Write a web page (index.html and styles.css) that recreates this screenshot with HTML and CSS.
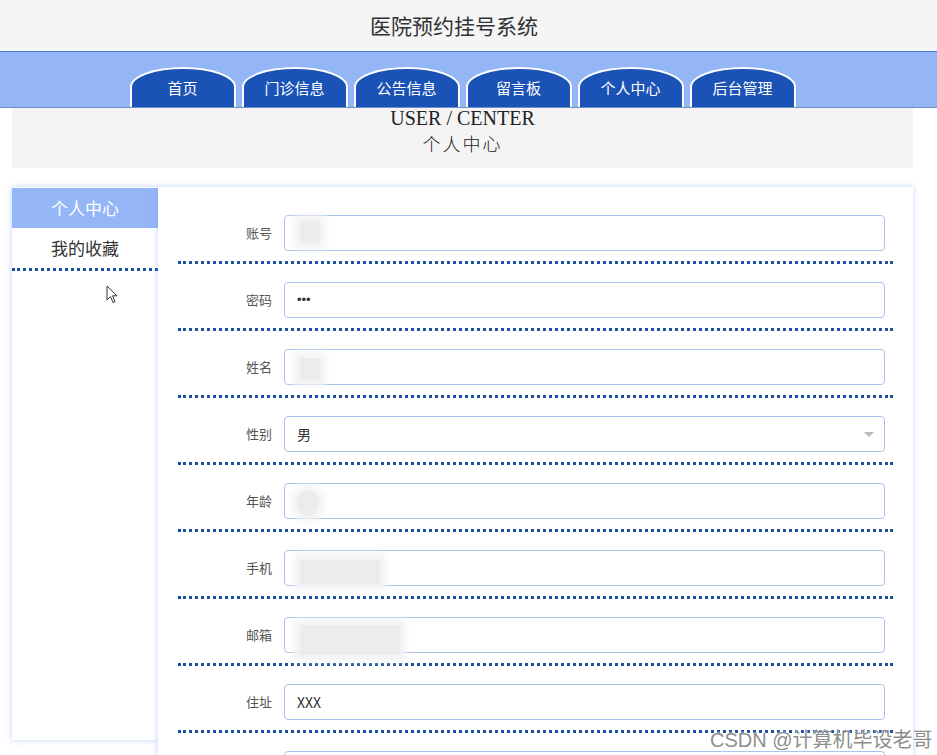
FILE: index.html
```html
<!DOCTYPE html>
<html lang="zh-CN">
<head>
<meta charset="utf-8">
<title>医院预约挂号系统</title>
<link rel="stylesheet" href="styles.css">
</head>
<body>
<header class="top">
  <div class="title">医院预约挂号系统</div>
</header>
<nav class="nav">
  <div class="tabs">
    <a class="tab">首页</a>
    <a class="tab">门诊信息</a>
    <a class="tab">公告信息</a>
    <a class="tab">留言板</a>
    <a class="tab">个人中心</a>
    <a class="tab">后台管理</a>
  </div>
</nav>
<section class="crumb">
  <div class="crumb-en">USER / CENTER</div>
  <div class="crumb-cn">个人中心</div>
</section>
<main class="main">
  <aside class="side">
    <div class="side-item active">个人中心</div>
    <div class="side-item dotted">我的收藏</div>
  </aside>
  <section class="panel">
    <div class="row">
      <label class="lbl">账号</label>
      <div class="field"><span class="blur b-acc"></span></div>
    </div>
    <div class="row">
      <label class="lbl">密码</label>
      <div class="field pwd">•••</div>
    </div>
    <div class="row">
      <label class="lbl">姓名</label>
      <div class="field"><span class="blur b-name"></span></div>
    </div>
    <div class="row">
      <label class="lbl">性别</label>
      <div class="field select">男<span class="caret"></span></div>
    </div>
    <div class="row">
      <label class="lbl">年龄</label>
      <div class="field"><span class="blur b-age"></span></div>
    </div>
    <div class="row">
      <label class="lbl">手机</label>
      <div class="field"><span class="blur b-phone"></span></div>
    </div>
    <div class="row">
      <label class="lbl">邮箱</label>
      <div class="field"><span class="blur b-mail"></span></div>
    </div>
    <div class="row">
      <label class="lbl">住址</label>
      <div class="field">XXX</div>
    </div>
    <div class="row">
      <label class="lbl"></label>
      <div class="field"></div>
    </div>
  </section>
</main>
<svg class="cursor" width="12" height="19" viewBox="0 0 12 19"><path d="M1 1 L1 15 L4.5 11.5 L7 17.5 L9 16.6 L6.6 10.8 L11 10.8 Z" fill="#fff" stroke="#333" stroke-width="1"/></svg>
<div class="watermark">CSDN @计算机毕设老哥</div>
</body>
</html>
```
FILE: styles.css
```css
html, body {
  margin: 0;
  padding: 0;
  overflow: hidden;
  background: #fff;
  font-family: "Noto Sans CJK SC", "Noto Sans", sans-serif;
}

.top {
  height: 51px;
  background: #f5f5f5;
}
.title {
  text-align: center;
  padding-right: 29px;
  font-size: 21px;
  line-height: 51px;
  color: #333;
}

.nav {
  height: 55px;
  background: #94b6f7;
  border-top: 1px solid #4a77cc;
  border-bottom: 1px solid #6f8fc8;
}
.tabs {
  display: flex;
  justify-content: center;
  align-items: flex-end;
  gap: 6px;
  height: 55px;
  margin-right: 12px;
}
.tab {
  box-sizing: border-box;
  width: 106px;
  height: 40px;
  background: #1a52b5;
  border: 2px solid #fff;
  border-bottom: none;
  border-radius: 50% 50% 0 0 / 20px 20px 0 0;
  color: #fff;
  font-size: 15px;
  line-height: 37px;
  text-align: center;
}

.crumb {
  margin: 0 24px 0 12px;
  height: 60px;
  background: #f4f4f4;
  border-radius: 0 0 4px 4px;
  text-align: center;
  color: #222;
  font-family: "Liberation Serif", "Noto Sans CJK SC", serif;
}
.crumb-en {
  font-size: 20px;
  line-height: 20px;
}
.crumb-cn {
  font-size: 18px;
  line-height: 34px;
  letter-spacing: 2px;
  font-weight: 300;
}

.main {
  display: flex;
  align-items: flex-start;
  margin: 19px 24px 0 12px;
}
.side {
  width: 146px;
  height: 552px;
  padding-top: 1px;
  background: #fff;
  box-shadow: 0 0 6px rgba(110, 155, 240, 0.45);
}
.side-item {
  height: 40px;
  line-height: 40px;
  text-align: center;
  font-size: 17px;
  color: #333;
}
.side-item.active {
  background: #94b6f7;
  color: #fff;
}
.side-item.dotted {
  border-bottom: 3px dotted #1a4fa8;
}

.panel {
  flex: 1;
  position: relative;
  background: #fff;
  padding: 28px 20px 40px;
  box-shadow: 0 0 6px rgba(110, 155, 240, 0.45);
}
.row {
  display: flex;
  align-items: center;
  padding: 0 8px 10px 0;
  margin-bottom: 18px;
  border-bottom: 3px dotted #1d4ea0;
}
.lbl {
  width: 106px;
  flex-shrink: 0;
  box-sizing: border-box;
  padding-right: 12px;
  text-align: right;
  font-size: 13px;
  line-height: 36px;
  color: #555;
}
.field {
  flex: 1;
  position: relative;
  height: 36px;
  box-sizing: border-box;
  border: 1px solid #a9c3ec;
  border-radius: 4px;
  padding: 0 12px;
  font-size: 14px;
  line-height: 34px;
  color: #333;
  font-family: "Noto Sans CJK SC", "Liberation Sans", sans-serif;
}
.field.pwd {
  font-family: "Liberation Sans", sans-serif;
  font-size: 13px;
  letter-spacing: 0;
}
.caret {
  position: absolute;
  right: 10px;
  top: 15px;
  width: 0;
  height: 0;
  border-left: 5px solid transparent;
  border-right: 5px solid transparent;
  border-top: 5px solid #b8bcc4;
}
.blur {
  position: absolute;
  background: #ececec;
  box-shadow: 0 0 6px 6px #f4f4f4;
}
.b-acc { left: 15px; top: 5px; width: 20px; height: 22px; }
.b-name { left: 15px; top: 8px; width: 20px; height: 22px; }
.b-age { left: 12px; top: 6px; width: 22px; height: 26px; border-radius: 50%; }
.b-phone { left: 15px; top: 9px; width: 80px; height: 24px; }
.b-mail { left: 15px; top: 7px; width: 100px; height: 30px; }

.cursor {
  position: absolute;
  left: 106px;
  top: 285px;
}
.watermark {
  position: absolute;
  left: 710px;
  top: 724px;
  font-size: 20px;
  color: rgba(110, 110, 110, 0.8);
  font-family: "Liberation Sans", "Noto Sans CJK SC", sans-serif;
  text-shadow: 0 0 2px #fff, 0 0 2px #fff;
  white-space: nowrap;
}
```
